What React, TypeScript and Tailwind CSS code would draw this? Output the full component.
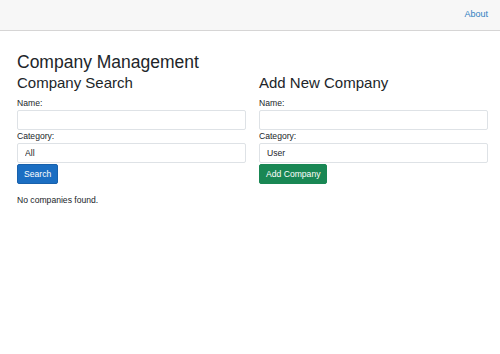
import { useState } from 'react';

const font = { fontFamily: '"Liberation Sans", Arial, sans-serif' };

function Field({ label, children }: { label: string; children: React.ReactNode }) {
  return (
    <div className="flex flex-col">
      <label className="text-[8.6px] leading-[13px] text-[#212529]">{label}</label>
      {children}
    </div>
  );
}

const inputCls =
  'h-[20px] w-full rounded-[2px] border border-[#dee2e6] bg-white px-[7px] text-[8.6px] text-[#212529] outline-none';

export default function App() {
  const [searchName, setSearchName] = useState('');
  const [newName, setNewName] = useState('');

  return (
    <div className="min-h-[354px] bg-white text-[#212529]" style={font}>
      {/* top row */}
      <div className="flex h-[31px] items-center justify-end border-b border-[#d6d5d5] bg-[#f7f7f7] pr-[12px]">
        <a href="#" className="text-[9px] text-[#2f7fc1]">
          About
        </a>
      </div>

      <div className="pl-[17px] pr-[12px] pt-[21px]">
        <h1 className="text-[17.5px] leading-[21px]">Company Management</h1>

        <div className="mt-[1px] grid grid-cols-2 gap-x-[13px]">
          {/* search */}
          <div className="flex flex-col">
            <h3 className="mb-[5px] text-[15px] leading-[18px]">Company Search</h3>
            <Field label="Name:">
              <input className={inputCls} value={searchName} onChange={(e) => setSearchName(e.target.value)} />
            </Field>
            <Field label="Category:">
              <select className={`${inputCls} appearance-none`} defaultValue="All">
                <option>All</option>
                <option>User</option>
              </select>
            </Field>
            <div className="mt-[1px] flex">
              <button className="h-[20px] rounded-[2px] border border-[#1861ac] bg-[#1b6ec2] px-[6px] text-[8.6px] text-white">
                Search
              </button>
            </div>
            <p className="mt-[10px] text-[8.6px] leading-[13px]">No companies found.</p>
          </div>

          {/* add */}
          <div className="flex flex-col">
            <h3 className="mb-[5px] text-[15px] leading-[18px]">Add New Company</h3>
            <Field label="Name:">
              <input className={inputCls} value={newName} onChange={(e) => setNewName(e.target.value)} />
            </Field>
            <Field label="Category:">
              <select className={`${inputCls} appearance-none`} defaultValue="User">
                <option>All</option>
                <option>User</option>
              </select>
            </Field>
            <div className="mt-[1px] flex">
              <button className="h-[20px] rounded-[2px] border border-[#198754] bg-[#198754] px-[6px] text-[8.6px] text-white">
                Add Company
              </button>
            </div>
          </div>
        </div>
      </div>
    </div>
  );
}
